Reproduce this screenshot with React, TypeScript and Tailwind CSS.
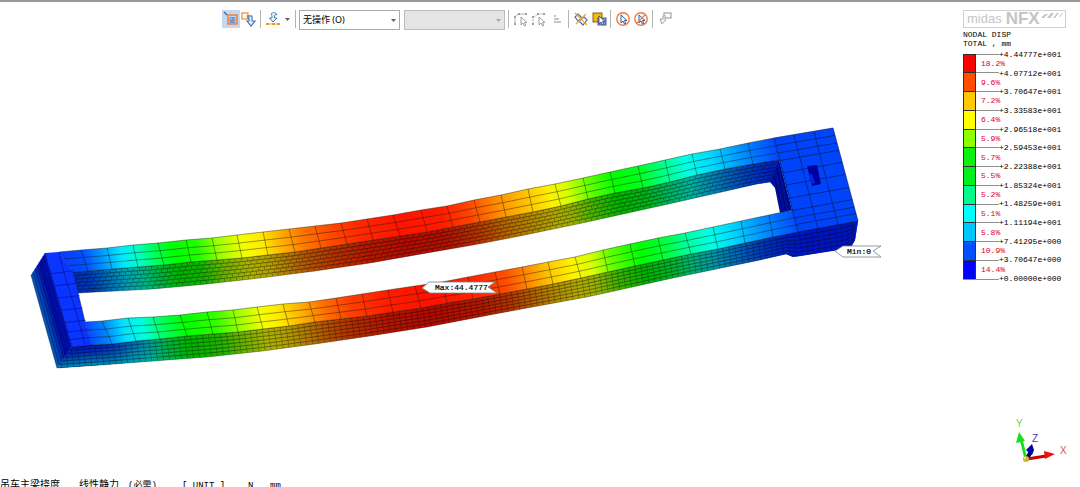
import type { ReactNode } from "react";

type Point = [number, number];
type Stop = [number, string];

const LEGEND = [
  { color: "bg-[#ff0000]", share: "18.2%" },
  { color: "bg-[#ff4d00]", share: "9.6%" },
  { color: "bg-[#ffc800]", share: "7.2%" },
  { color: "bg-[#ffff00]", share: "6.4%" },
  { color: "bg-[#8cff00]", share: "5.9%" },
  { color: "bg-[#10f010]", share: "5.7%" },
  { color: "bg-[#00f01e]", share: "5.5%" },
  { color: "bg-[#00fa8c]", share: "5.2%" },
  { color: "bg-[#00ffff]", share: "5.1%" },
  { color: "bg-[#00c8ff]", share: "5.8%" },
  { color: "bg-[#0050ff]", share: "10.9%" },
  { color: "bg-[#0000ff]", share: "14.4%" },
];

const VALUES = [
  "+4.44777e+001", "+4.07712e+001", "+3.70647e+001", "+3.33583e+001", "+2.96518e+001",
  "+2.59453e+001", "+2.22388e+001", "+1.85324e+001", "+1.48259e+001", "+1.11194e+001",
  "+7.41295e+000", "+3.70647e+000", "+0.00000e+000",
];

// Rear girder: top face back edge, top face front edge, underside
const REAR_BACK: Point[] = [
  [59, 252], [81, 250], [107, 248], [133, 245], [158, 243], [186, 240], [212, 238], [237, 235], [263, 232],
  [289, 229], [315, 226], [341, 223], [367, 219], [393, 215], [421, 210], [447, 206], [474, 200], [501, 195],
  [528, 189], [555, 184], [583, 178], [610, 172], [638, 166], [665, 160], [692, 154], [720, 149], [748, 143], [774, 138],
];
const REAR_FRONT: Point[] = [
  [73, 272], [88, 271], [112, 269], [138, 267], [164, 265], [191, 262], [217, 260], [242, 258], [268, 255],
  [295, 252], [321, 248], [347, 244], [373, 240], [400, 236], [427, 232], [453, 227], [480, 222], [506, 217],
  [533, 212], [561, 206], [588, 199], [615, 193], [643, 188], [670, 182], [697, 175], [725, 169], [753, 164], [779, 160],
];
const REAR_BOTTOM: Point[] = [
  [78, 293], [153, 289], [207, 284], [260, 278], [315, 271], [370, 263], [427, 253], [473, 245], [520, 236],
  [587, 222], [673, 203], [757, 184], [770, 182], [779, 180],
];

// Front girder, same three edges
const NEAR_BACK: Point[] = [
  [85, 322], [102, 321], [128, 318], [153, 317], [180, 315], [207, 312], [233, 310], [257, 307], [283, 304],
  [309, 302], [336, 298], [362, 294], [388, 290], [415, 286], [442, 282], [468, 277], [495, 272], [522, 267],
  [548, 262], [575, 257], [603, 250], [630, 244], [658, 238], [685, 233], [713, 227], [741, 221], [769, 215], [792, 210],
];
const NEAR_FRONT: Point[] = [
  [92, 345], [112, 344], [136, 341], [160, 339], [187, 336], [213, 334], [238, 332], [263, 329], [289, 326],
  [315, 322], [341, 319], [367, 316], [393, 312], [421, 308], [447, 303], [473, 299], [500, 294], [527, 289],
  [553, 284], [581, 278], [608, 272], [635, 266], [663, 260], [691, 254], [718, 249], [745, 243], [773, 237], [798, 232],
];
const NEAR_TOP_EDGE: Point[] = [[72, 347], ...NEAR_FRONT, [858, 221]];
const NEAR_BOTTOM: Point[] = [
  [57, 368], [100, 365], [140, 362], [207, 357], [263, 351], [315, 344], [370, 336], [427, 327], [500, 313],
  [587, 297], [673, 278], [760, 260], [786, 254], [793, 257], [837, 250], [851, 247], [855, 240], [858, 221],
];

const REAR_STOPS: Stop[] = [
  [60, "#0a38ff"], [85, "#0050ff"], [105, "#00a0ff"], [122, "#00e8ff"], [138, "#00ffc8"], [157, "#00ff50"], [175, "#00ff00"],
  [198, "#20ff00"], [220, "#a0ff00"], [243, "#f4ff00"], [262, "#ffea00"], [280, "#ffb400"], [303, "#ff7800"], [330, "#ff4a00"],
  [360, "#ff2800"], [400, "#ff1400"], [440, "#ff1a00"], [470, "#ff4600"], [502, "#ff9600"], [530, "#ffc800"], [550, "#fff000"],
  [567, "#d8ff00"], [590, "#60ff00"], [615, "#00ff00"], [640, "#00ff20"], [662, "#00ff80"], [687, "#00ffe6"], [712, "#00d8ff"],
  [742, "#0090ff"], [776, "#0048ff"],
];
const NEAR_STOPS: Stop[] = [
  [85, "#0a40ff"], [105, "#0080ff"], [124, "#00e0ff"], [143, "#00ffe0"], [163, "#00ff60"], [185, "#00ff00"], [215, "#30ff00"],
  [240, "#a0ff00"], [262, "#f4ff00"], [280, "#ffe600"], [300, "#ffb400"], [325, "#ff6e00"], [350, "#ff4000"], [385, "#ff1e00"],
  [430, "#ff1000"], [480, "#ff2800"], [507, "#ff5000"], [530, "#ff9000"], [550, "#ffc800"], [573, "#fff400"], [592, "#d8ff00"],
  [612, "#60ff00"], [640, "#00ff00"], [667, "#00ff40"], [687, "#00ffa0"], [710, "#00ffe6"], [732, "#00d8ff"], [762, "#0090ff"],
  [798, "#0048ff"],
];

const points = (list: Point[]) => list.map((p) => p.join(",")).join(" ");
const face = (top: Point[], bottom: Point[]) => points([...top, ...[...bottom].reverse()]);

const mix = (a: Point, b: Point, t: number): Point => [
  Math.round((a[0] + (b[0] - a[0]) * t) * 10) / 10,
  Math.round((a[1] + (b[1] - a[1]) * t) * 10) / 10,
];

function heightAt(edge: Point[], x: number) {
  for (let i = 1; i < edge.length; i++) {
    const [ax, ay] = edge[i - 1];
    const [bx, by] = edge[i];
    if (x <= bx) return ay + ((by - ay) * (x - ax)) / (bx - ax);
  }
  return edge[edge.length - 1][1];
}

// Contour bands lean with the mesh, so the gradient axis is tilted
const LEAN = -0.24;

function Contour({ id, back, front, stops }: { id: string; back: Point[]; front: Point[]; stops: Stop[] }) {
  const first = stops[0][0];
  const last = stops[stops.length - 1][0];
  const mid = (x: number) => (heightAt(back, x) + heightAt(front, x)) / 2;
  const along = (x: number) => x - first + LEAN * (mid(x) - mid(first));
  const length = along(last) / (1 + LEAN * LEAN);
  return (
    <linearGradient
      id={id}
      gradientUnits="userSpaceOnUse"
      x1={first}
      y1={mid(first)}
      x2={first + length}
      y2={mid(first) + length * LEAN}
    >
      {stops.map(([x, color]) => (
        <stop key={x} offset={along(x) / along(last)} stopColor={color} />
      ))}
    </linearGradient>
  );
}

function TopMesh({ back, front }: { back: Point[]; front: Point[] }) {
  return (
    <g fill="none" stroke="#101800" strokeWidth="0.7" strokeOpacity="0.6">
      {back.map((p, i) => (
        <line key={i} x1={p[0]} y1={p[1]} x2={front[i][0]} y2={front[i][1]} />
      ))}
      {[0, 0.35, 0.68, 1].map((t) => (
        <polyline key={t} points={points(back.map((p, i) => mix(p, front[i], t)))} />
      ))}
    </g>
  );
}

function SideMesh({ top, bottom, to, layers }: { top: Point[]; bottom: Point[]; to: number; layers: number }) {
  const xs: number[] = [];
  for (let x = Math.max(top[0][0], bottom[0][0]) + 6; x < to; x += 12) xs.push(x);
  xs.push(to);
  const row = (t: number) =>
    points([
      mix(top[0], bottom[0], t),
      ...xs.map((x) => mix([x, heightAt(top, x)], [x, heightAt(bottom, x)], t)),
    ]);
  const rows = Array.from({ length: layers }, (_, i) => i);
  return (
    <g fill="none" stroke="#000000">
      {rows.map((i) => (
        <g key={i}>
          <polyline points={row(i / layers)} strokeWidth="0.8" strokeOpacity="0.5" />
          <polyline
            points={row((i + 0.5) / layers)}
            strokeWidth="3"
            strokeOpacity="0.32"
            strokeDasharray="0.8 5.2"
            strokeDashoffset={i % 2 ? 3 : 0}
          />
        </g>
      ))}
      <polyline points={row(1)} strokeWidth="0.6" strokeOpacity="0.5" />
    </g>
  );
}

function Model() {
  const sideTopLeft: Point = [45, 253];
  const sideBottomLeft: Point = [72, 347];
  return (
    <svg viewBox="0 90 963 300" className="block w-full" role="img" aria-label="NODAL DISP">
      <defs>
        <Contour id="rear" back={REAR_BACK} front={REAR_FRONT} stops={REAR_STOPS} />
        <Contour id="near" back={NEAR_BACK} front={NEAR_FRONT} stops={NEAR_STOPS} />
        <linearGradient id="end" gradientUnits="userSpaceOnUse" x1="39" y1="324" x2="60" y2="318">
          <stop offset="0" stopColor="#0078b4" />
          <stop offset="0.45" stopColor="#0046b4" />
          <stop offset="0.8" stopColor="#000ca8" />
          <stop offset="1" stopColor="#0010b4" />
        </linearGradient>
        <linearGradient id="corner" gradientUnits="userSpaceOnUse" x1="76" y1="345" x2="79" y2="368">
          <stop offset="0" stopColor="#0010b0" />
          <stop offset="0.4" stopColor="#0030b0" />
          <stop offset="1" stopColor="#0096b4" />
        </linearGradient>
        <linearGradient id="cornerFade" x1="0" y1="0" x2="1" y2="0">
          <stop offset="0" stopColor="#ffffff" />
          <stop offset="0.35" stopColor="#ffffff" />
          <stop offset="1" stopColor="#000000" />
        </linearGradient>
        <mask id="cornerMask">
          <rect x="55" y="330" width="110" height="45" fill="url(#cornerFade)" />
        </mask>
        <linearGradient id="shade" gradientUnits="userSpaceOnUse" x1="690" y1="0" x2="800" y2="0">
          <stop offset="0" stopColor="#0010c0" stopOpacity="0" />
          <stop offset="1" stopColor="#0010c0" stopOpacity="0.85" />
        </linearGradient>
      </defs>

      {/* rear girder */}
      <polygon points={face(REAR_FRONT, REAR_BOTTOM)} fill="url(#rear)" />
      <polygon points={face(REAR_FRONT, REAR_BOTTOM)} fill="#000000" fillOpacity="0.3" />
      <polygon points={face(REAR_FRONT, REAR_BOTTOM)} fill="url(#shade)" />
      <SideMesh top={REAR_FRONT} bottom={REAR_BOTTOM} to={775} layers={6} />
      <polygon points="779,160 792,210 780,213 775,188 770,182" fill="#000f9c" />
      <path d="M774 175l9 37M777 168l9 43M779 162l11 48" stroke="#000050" strokeWidth="0.7" fill="none" />
      <polygon points={face(REAR_BACK, REAR_FRONT)} fill="url(#rear)" />
      <TopMesh back={REAR_BACK} front={REAR_FRONT} />

      {/* front girder */}
      <polygon points={face(NEAR_TOP_EDGE, NEAR_BOTTOM)} fill="url(#near)" />
      <polygon points={face(NEAR_TOP_EDGE, NEAR_BOTTOM)} fill="#000000" fillOpacity="0.3" />
      <polygon points={face(NEAR_TOP_EDGE, NEAR_BOTTOM)} fill="url(#shade)" />
      <polygon points={face(NEAR_TOP_EDGE, NEAR_BOTTOM)} fill="url(#corner)" mask="url(#cornerMask)" />
      <SideMesh top={NEAR_TOP_EDGE} bottom={NEAR_BOTTOM} to={855} layers={6} />
      <polygon points={face(NEAR_BACK, NEAR_FRONT)} fill="url(#near)" />
      <TopMesh back={NEAR_BACK} front={NEAR_FRONT} />

      {/* left end beam */}
      <polygon points="45,253 31,275 57,368 72,347" fill="url(#end)" />
      <g stroke="#000046" strokeOpacity="0.55" strokeWidth="0.8">
        {[0, 0.14, 0.28, 0.42, 0.56, 0.7, 0.85, 1].map((t) => {
          const a = mix(sideTopLeft, [31, 275], t);
          const b = mix(sideBottomLeft, [57, 368], t);
          return <line key={t} x1={a[0]} y1={a[1]} x2={b[0]} y2={b[1]} />;
        })}
      </g>
      <polygon points="45,253 59,252 73,272 85,322 92,345 72,347" fill="#0a34ff" />
      <g fill="none" stroke="#000a78" strokeOpacity="0.75" strokeWidth="0.7">
        <polyline points="45,253 72,347 92,345" />
        <polyline points="59,252 64,273 79,322 85,345" />
        <polyline points="73,272 85,322" />
        {[0.22, 0.35, 0.48, 0.61, 0.74, 0.84, 0.92].map((t) => {
          const a = mix(sideTopLeft, sideBottomLeft, t);
          const b = mix([68, 250], [92, 345], t);
          return <line key={t} x1={a[0]} y1={a[1]} x2={b[0]} y2={b[1]} />;
        })}
      </g>

      {/* right end beam */}
      <polygon points="774,138 833,128 858,221 798,232 792,210 779,160" fill="#0044fa" />
      <g fill="none" stroke="#001450" strokeOpacity="0.75" strokeWidth="0.8">
        <polygon points="774,138 833,128 858,221 798,232" />
        <line x1="794" y1="135" x2="818" y2="229" />
        <line x1="814" y1="132" x2="838" y2="225" />
        {[0.08, 0.16, 0.24, 0.37, 0.5, 0.64, 0.77, 0.85, 0.92].map((t) => {
          const a = mix([774, 138], [798, 232], t);
          const b = mix([833, 128], [858, 221], t);
          return <line key={t} x1={a[0]} y1={a[1]} x2={b[0]} y2={b[1]} />;
        })}
      </g>
      <polygon points="807,166 817,165 821,184 812,186" fill="#0000a0" />
      <polygon points="809,175 812,174 815,183 812,184" fill="#0028e0" />

      {/* probe flags */}
      <g fill="#ffffff" stroke="#808080" strokeWidth="0.8">
        <polygon points="422,288 429,282 495,282 488,287 497,293 430,293" />
        <polygon points="835,251 843,246 881,246 873,251 881,257 843,257" />
      </g>
      <g fontFamily="'Liberation Mono', monospace" fontSize="8" fill="#000000" stroke="#000000" strokeWidth="0.2">
        <text x="435" y="290">Max:44.4777</text>
        <text x="847" y="254">Min:0</text>
      </g>
    </svg>
  );
}

function Triad() {
  return (
    <svg viewBox="0 0 60 50" className="ml-[50px] h-[50px] w-[60px]" role="img" aria-label="X Y Z">
      <path d="M14 42L9 22" stroke="#18e018" strokeWidth="3" />
      <polygon points="7,15 4,26 13,24" fill="#18e018" />
      <path d="M15 42l4-8" stroke="#000090" strokeWidth="4" />
      <polygon points="20,27 14,33 17,36 20,38 22,33" fill="#0000a0" />
      <path d="M15 42l19-3" stroke="#d00000" strokeWidth="3" />
      <polygon points="43,37 32,34 33,42" fill="#f01010" />
      <circle cx="14" cy="42" r="3" fill="#c8b428" />
      <circle cx="13" cy="41" r="1" fill="#fff8a0" />
      <g fontFamily="'Liberation Sans', sans-serif" fontSize="10">
        <text x="4" y="10" fill="#50e050">Y</text>
        <text x="20" y="25" fill="#4040c8">Z</text>
        <text x="48" y="37" fill="#e05050">X</text>
      </g>
    </svg>
  );
}

function Tool({ label, active, children }: { label: string; active?: boolean; children: ReactNode }) {
  return (
    <button
      type="button"
      aria-label={label}
      className={`flex h-[18px] w-[18px] items-center justify-center ${active ? "bg-[#c5d7ef]" : ""}`}
    >
      <svg viewBox="0 0 16 16" className="h-4 w-4" fill="none">
        {children}
      </svg>
    </button>
  );
}

const Divider = () => <span className="ml-[2px] mr-[3px] h-[18px] w-px bg-[#b4b4b4]" />;

const Caret = ({ className }: { className: string }) => (
  <svg viewBox="0 0 5 3" className={`h-[3px] w-[5px] ${className}`}>
    <polygon points="0,0 5,0 2.5,3" fill="currentColor" />
  </svg>
);

const CURSOR = "M6 4v8l2-2 1.5 3 1.3-.6L9.5 9.5H12z";

function Toolbar() {
  return (
    <div className="flex items-start pl-[222px] pt-2">
      <Tool label="Snap" active>
        <rect x="5" y="4" width="9" height="9" stroke="#ee7b30" strokeWidth="1.4" />
        <path d="M1 1l3 3M10 7v3H7" stroke="#3c5a8c" strokeWidth="1.1" />
        <path d="M7 6.500h5v5H7zM7 7l4 4" stroke="#6f93cc" />
      </Tool>
      <Tool label="Move">
        <rect x="1" y="2" width="6" height="6" stroke="#ee8a3c" strokeWidth="1.2" />
        <path d="M5 5h5" stroke="#ee8a3c" />
        <path d="M7 5h4v5h3L10 15 6 10h2V7H7z" fill="#e8f1fb" stroke="#3f6ea5" strokeWidth="1.1" />
      </Tool>
      <Divider />
      <Tool label="Load direction">
        <path d="M6 3c2-2 5-2 6 1-1-1-2-1-2.500 1v2H12L8 11 4.500 7H7c0-2 0-3-1-4z" fill="#eef5fc" stroke="#4c7cae" />
        <path d="M2 13h12" stroke="#e8a83c" />
        <path d="M1 12h3v2H1zM7 12h3v2H7zM12 12h3v2h-3z" fill="#f09a1e" />
      </Tool>
      <button type="button" aria-label="More load directions" className="flex h-[18px] w-[11px] items-center justify-center text-[#606060]">
        <Caret className="" />
      </button>
      <Divider />
      <div className="relative mr-1 w-[101px]">
        <select
          aria-label="Operation"
          className="block h-5 w-full appearance-none border border-[#ababab] bg-white pl-[3px] font-['Noto_Sans','Noto_Sans_CJK_SC',sans-serif] text-[9px] leading-4 text-black"
        >
          <option>无操作 (O)</option>
        </select>
        <Caret className="pointer-events-none absolute right-1 top-[9px] text-[#606060]" />
      </div>
      <div className="relative mr-px w-[101px]">
        <select
          aria-label="Target"
          disabled
          className="block h-5 w-full appearance-none border border-[#bcbcbc] bg-[#e4e4e4] text-[9px]"
        />
        <Caret className="pointer-events-none absolute right-1 top-[9px] text-[#a8a8a8]" />
      </div>
      <Divider />
      <Tool label="Select edge">
        <path d="M2 13V6l3-3h8" stroke="#b0b0b0" />
        <path d="M1 12h2v2H1zM1 5h2v2H1zM5 2h2v2H5zM12 2h2v2h-2z" fill="#a0a0a0" />
        <path d={CURSOR} transform="translate(2 2)" stroke="#a0a0a0" fill="#ffffff" />
      </Tool>
      <Tool label="Select path">
        <path d="M2 13V7l5-4h6" stroke="#b0b0b0" strokeDasharray="2 1" />
        <path d="M1 12h2v2H1zM1 5h2v2H1zM6 2h2v2H6zM12 2h2v2h-2z" fill="#a0a0a0" />
        <path d={CURSOR} transform="translate(2 2)" stroke="#a0a0a0" fill="#ffffff" />
      </Tool>
      <Tool label="List">
        <path d="M5 5h2M5 8h5M5 11h7" stroke="#b0b0b0" strokeWidth="1.4" />
      </Tool>
      <Divider />
      <Tool label="Clear selection">
        <path d="M5 3l4 4-4 3-3-4zM11 6l3 3-4 5-4-4z" stroke="#4a6fb0" strokeWidth="1.2" />
        <path d="M2 2l12 12M13 3L3 13" stroke="#eda62a" strokeWidth="1.300" />
      </Tool>
      <Tool label="Select front">
        <rect x="2" y="2" width="9" height="9" fill="#f8b808" stroke="#7a6230" />
        <rect x="7" y="7" width="8" height="7" fill="#7f9bd0" stroke="#4a5a80" />
        <path d={CURSOR} transform="translate(2 1)" fill="#ffffff" stroke="#2e4480" strokeWidth="0.8" />
      </Tool>
      <Divider />
      <Tool label="Pick">
        <circle cx="8" cy="8" r="6.200" stroke="#ee7b3c" strokeWidth="1.4" />
        <path d={CURSOR} fill="#ffffff" stroke="#2f5f96" />
      </Tool>
      <Tool label="Unpick">
        <circle cx="8" cy="8" r="6.200" stroke="#ee7b3c" strokeWidth="1.4" />
        <path d={CURSOR} fill="#ffffff" stroke="#2f5f96" />
        <path d="M12.500 3.500l-9 9" stroke="#ee7b3c" strokeWidth="1.3" />
      </Tool>
      <Divider />
      <Tool label="Send back">
        <rect x="7" y="2" width="7" height="5" stroke="#a8a8a8" strokeWidth="1.3" />
        <path d="M9 5H6v3H3l2 5 4-4H8V6" fill="#f0f0f0" stroke="#a8a8a8" />
      </Tool>
    </div>
  );
}

function Legend() {
  return (
    <section className="font-['Liberation_Mono',monospace] text-[8px] leading-[9px] text-black">
      <h2 className="mt-[2px] whitespace-pre">{"NODAL DISP\nTOTAL , mm"}</h2>
      <div className="-mt-[3px] flex items-center">
        <ul className="flex h-[226px] w-9 flex-col border-b border-[#909090]">
          {LEGEND.map((band) => (
            <li key={band.share} className="flex flex-1 border-t border-[#909090]">
              <span className={`-mt-px w-[13px] shrink-0 border border-b-0 border-[#303030] ${band.color}`} />
              <span className="self-center pl-[5px] text-[#e00020]">{band.share}</span>
            </li>
          ))}
        </ul>
        <ul className="flex h-[243px] flex-col">
          {VALUES.map((value) => (
            <li key={value} className="flex flex-1 items-center">{value}</li>
          ))}
        </ul>
      </div>
    </section>
  );
}

export default function App() {
  return (
    <div className="flex h-screen overflow-hidden border-t-2 border-[#989898] bg-white">
      <div className="flex min-w-0 flex-1 flex-col">
        <Toolbar />
        <main className="mt-[60px]">
          <Model />
        </main>
        <footer className="mt-auto h-2 whitespace-nowrap font-['Liberation_Mono','Noto_Sans_CJK_SC',monospace] text-[9px] leading-[14px] text-black">
          <div className="flex">
            <span className="w-[79px] text-[10px]">吊车主梁挠度</span>
            <span className="w-[49px] text-[10px]">线性静力</span>
            <span className="w-[54px]">(必需)</span>
            <span className="w-[66px]">[ UNIT ]</span>
            <span className="w-[22px]">N</span>
            <span>mm</span>
          </div>
        </footer>
      </div>
      <aside className="flex w-[117px] shrink-0 flex-col pt-2">
        <h1 className="flex h-[18px] w-[103px] items-center border border-[#d0d0d0] pl-[3px] font-['Liberation_Sans',sans-serif] text-[#c4c4c4]">
          <span className="text-[13px]">midas</span>
          <span className="ml-1 text-[17px] font-bold">NFX</span>
          <svg viewBox="0 0 24 8" className="mb-2 h-2 w-6 min-w-0" fill="#c4c4c4">
            <path d="M1 7l4-4h3L4 7zM7 7l4-5h3l-4 5zM13 7l4-5h2l-4 5zM19 6l3-4h1l-3 4z" />
          </svg>
        </h1>
        <Legend />
        <div className="-ml-px mb-5 mt-auto">
          <Triad />
        </div>
      </aside>
    </div>
  );
}
